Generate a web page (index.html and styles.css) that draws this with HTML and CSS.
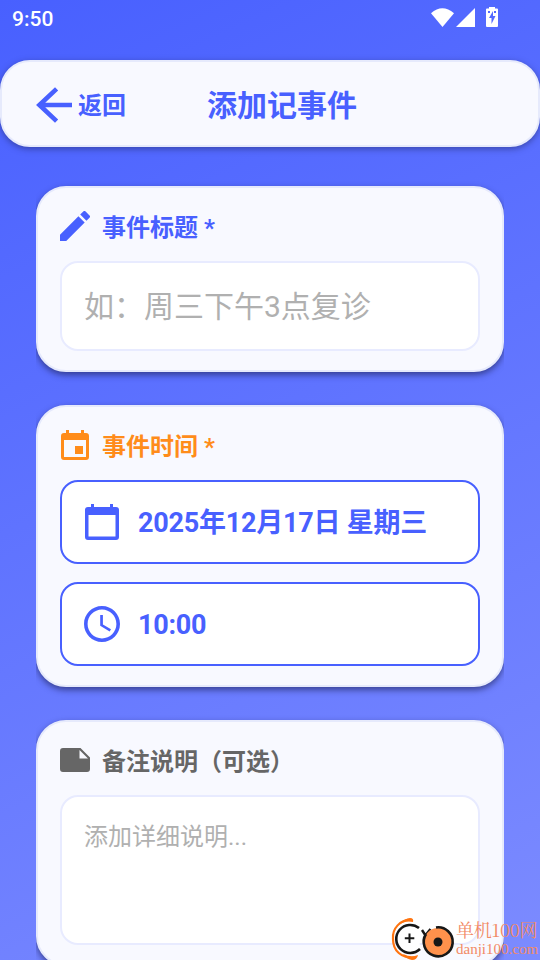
FILE: index.html
```html
<!DOCTYPE html>
<html lang="zh-CN">
<head>
<meta charset="utf-8">
<title>添加记事件</title>
<link rel="stylesheet" href="styles.css">
</head>
<body>
<div class="screen">
  <div class="status">
    <span class="clock">9:50</span>
    <svg class="status-icons" width="70" height="24" viewBox="0 0 70 24" fill="#fff">
      <path d="M1 9.200Q12.300-.8 24 9.200L12.500 23Z"/>
      <path d="M45 4V23H26Z"/>
      <path fill-rule="evenodd" d="M59 4.500V3h6v1.500h2q1 0 1 1V22q0 1-1 1H57q-1 0-1-1V5.500q0-1 1-1ZM58 7v2h2V7Zm6 0v2h2V7Zm-1 0-4 7h2.500v6l4-8H63Z"/>
    </svg>
  </div>
  <header class="header">
    <div class="back">
      <svg width="48" height="48" viewBox="0 0 24 24"><path d="M21 12H4.500M13.300 3.900 4.700 12l8.600 8.100" fill="none" stroke="currentColor" stroke-width="2.300"/></svg>
      <span>返回</span>
    </div>
    <h1>添加记事件</h1>
  </header>
  <main>
    <div class="clip"><section class="card">
      <h2 class="blue"><svg width="30" height="30" viewBox="3 3 18 18"><path fill="currentColor" d="M3 17.250V21h3.750L17.810 9.940l-3.750-3.750zM20.710 7.040a1 1 0 0 0 0-1.410l-2.340-2.340a1 1 0 0 0-1.410 0l-1.830 1.830 3.750 3.750z"/></svg><span>事件标题 *</span></h2>
      <div class="field title-field">如：周三下午3点复诊</div>
    </section></div>
    <div class="clip"><section class="card">
      <h2 class="orange"><svg width="30" height="30" viewBox="0 0 30 30"><path fill="currentColor" fill-rule="evenodd" d="M6 0h3v3h12V0h3v3h2q3 0 3 3v21q0 3-3 3H4q-3 0-3-3V6q0-3 3-3h2ZM4 10v17h22V10ZM15 16h8v8h-8Z"/></svg><span>事件时间 *</span></h2>
      <div class="field picker"><svg width="36" height="36" viewBox="0 0 36 36"><path fill="currentColor" fill-rule="evenodd" d="M7 0h3v3h16V0h3v3h3q3 0 3 3v27q0 3-3 3H4q-3 0-3-3V6q0-3 3-3h3ZM4.500 11v21.500h27V11Z"/></svg><span class="date">2025年12月17日 星期三</span></div>
      <div class="field picker"><svg width="36" height="36" viewBox="2 2 20 20"><path fill="currentColor" d="M11.990 2C6.470 2 2 6.480 2 12s4.470 10 9.990 10C17.520 22 22 17.520 22 12S17.520 2 11.990 2M12 20c-4.420 0-8-3.580-8-8s3.580-8 8-8 8 3.580 8 8-3.580 8-8 8m.5-13H11v6l5.250 3.150.75-1.230-4.500-2.670z"/></svg><span class="time">10:00</span></div>
    </section></div>
    <div class="clip"><section class="card">
      <h2 class="gray"><svg width="30" height="24" viewBox="0 0 30 24"><path fill="currentColor" fill-rule="evenodd" d="M3 0H20.500L30 9.500V21q0 3-3 3H3q-3 0-3-3V3q0-3 3-3ZM19.500 2v8.500H28Z"/></svg><span>备注说明（可选）</span></h2>
      <div class="field notes-field">添加详细说明...</div>
    </section></div>
  </main>
  <div class="watermark">
    <svg width="66" height="44" viewBox="0 0 66 44" fill="none">
      <path d="M22 3C10 2 2 12 3 22C3 34 11 41 25 41" stroke="#ff7410" stroke-width="2.200"/>
      <path d="M9 8Q15 1 20 1Q24 1 23 5Q15 3 9 8ZM13 37Q21 41 28 38Q27 43 22 43Q16 42 13 37Z" fill="#ff7410"/>
      <path d="M29 11A14 14 0 1 0 30 32" fill="#fff" stroke="#171717" stroke-width="2.600"/>
      <path d="M19.500 16.500v9.500M14.800 21.200h9.500" stroke="#171717" stroke-width="2"/>
      <path d="M32 13l3.500 5.500M36 17.500l4.500-5.500" stroke="#171717" stroke-width="2.400"/>
      <circle cx="48" cy="25" r="14" fill="#ff914c"/>
      <path d="M46 10.500A14.500 14.500 0 1 1 36 17" stroke="#171717" stroke-width="2.600"/>
      <circle cx="48" cy="25" r="4.500" fill="#171717"/>
    </svg>
    <div class="wm-text"><span class="wm-name">单机100网</span><span class="wm-url">danji100.com</span></div>
  </div>
</div>
</body>
</html>
```
FILE: styles.css
```css
* { box-sizing: border-box; }
body { margin: 0; font-family: Roboto, "Noto Sans CJK SC", sans-serif; }
.screen {
  position: relative;
  width: 540px;
  height: 960px;
  overflow: hidden;
  background: linear-gradient(155deg, #4860ff, #7c8bff);
}
svg { display: block; flex: none; }
.status {
  height: 60px;
  padding: 4px 40px 0 12px;
  display: flex;
  justify-content: space-between;
  color: #fff;
}
.clock { font-size: 21px; line-height: 30px; font-weight: 500; }
.header {
  height: 87px;
  border: 2px solid #e6eafc;
  border-radius: 30px;
  background: #f8f9ff;
  box-shadow: 0 2px 6px rgba(30, 35, 90, .5);
  display: grid;
  grid-template-columns: 205px 1fr;
  align-items: center;
  color: #4860ff;
  padding-top: 3px;
}
.back { display: flex; align-items: center; padding-left: 28px; font-size: 24px; font-weight: 700; }
.back span { margin-top: -3px; }
h1 { margin: 2px 0 0; font-size: 30px; line-height: 40px; font-weight: 700; }
main { padding: 39px 36px 0; display: flex; flex-direction: column; gap: 33px; }
.clip { clip-path: inset(-12px 0 -16px 0); }
.card {
  border: 2px solid #e6eafc;
  border-radius: 30px;
  background: #f8f9ff;
  box-shadow: 0 3px 6px rgba(30, 35, 90, .65);
  padding: 22px 22px 19px;
}
h2 {
  margin: 0 0 18px;
  height: 33px;
  display: flex;
  align-items: center;
  gap: 12px;
  font-size: 24px;
  line-height: 33px;
  font-weight: 700;
}
h2 svg { margin-top: -1px; }
h2 span { padding-top: 3px; }
.blue { color: #4860ff; }
.orange { color: #ff8c1a; }
.gray { color: #666; }
.field { border: 2px solid #e8ebff; border-radius: 18px; background: #fff; color: #b0b0b0; padding: 0 22px; }
.title-field { height: 90px; font-size: 30px; line-height: 88px; }
.picker {
  height: 84px;
  border-color: #4860ff;
  display: flex;
  align-items: center;
  gap: 18px;
  color: #4860ff;
  font-size: 27px;
  font-weight: 700;
  letter-spacing: -.25px;
}
.date { padding-bottom: 3px; }
.time { padding-top: 2px; }
.picker + .picker { margin-top: 18px; }
.notes-field { height: 150px; font-size: 24px; line-height: 36px; padding-top: 22px; }
.watermark { position: absolute; left: 390px; top: 917px; display: flex; }
.wm-text { display: flex; flex-direction: column; font-family: "Noto Serif CJK SC", "Noto Sans CJK SC", serif; color: #f28a65; white-space: nowrap; }
.wm-name { font-size: 18px; line-height: 25px; letter-spacing: -.2px; }
.wm-url { font-family: "Liberation Serif", serif; font-size: 15px; line-height: 14px; }
```
